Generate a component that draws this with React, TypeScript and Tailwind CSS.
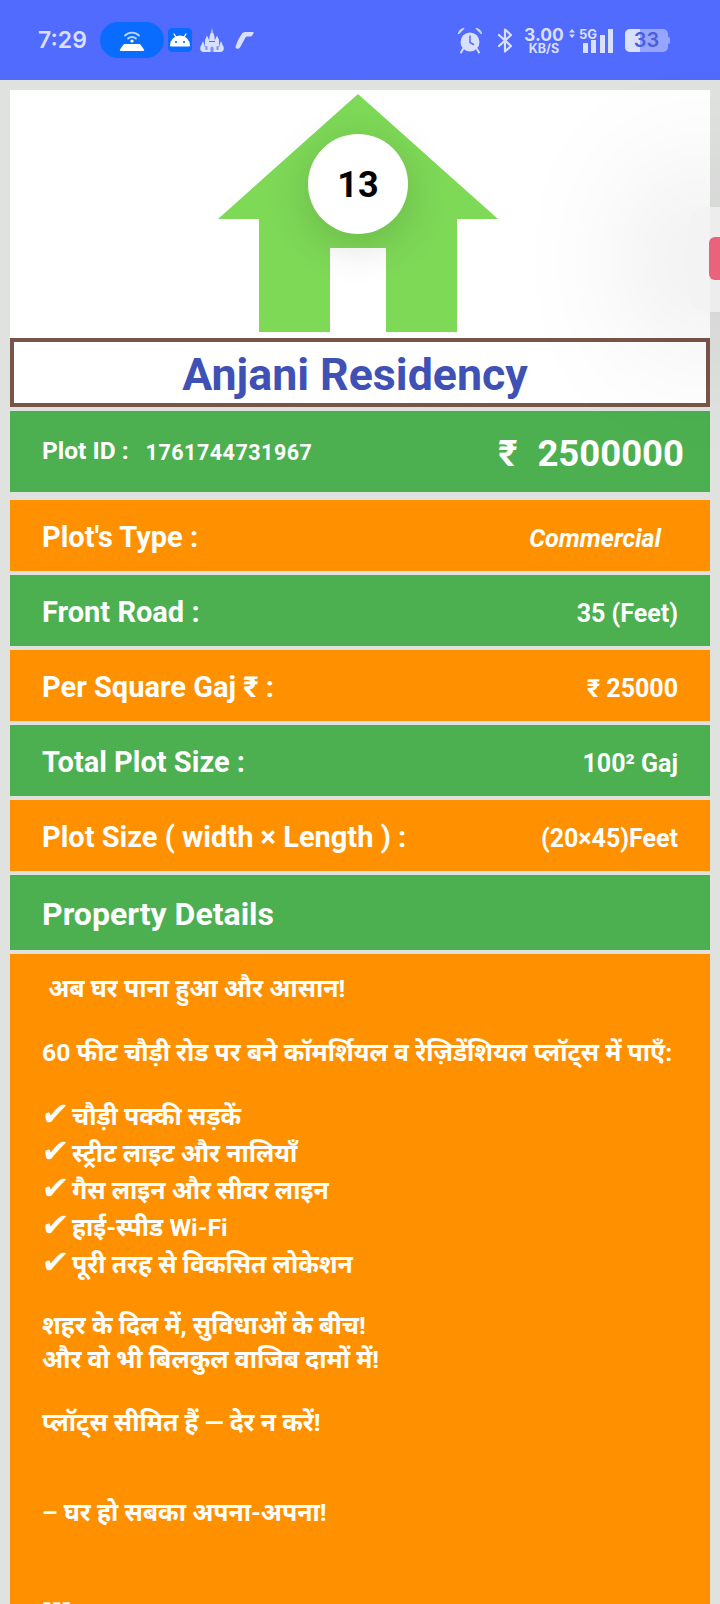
import React from "react";

const font = { fontFamily: "Roboto, 'Noto Sans', sans-serif" };

function StatusBar() {
  return (
    <div className="relative flex h-[80px] items-center bg-[#526bff] text-[#d9dfff]" style={{ fontFamily: "Inter, sans-serif" }}>
      <span className="ml-[38px] w-[62px] text-[23px] font-semibold leading-none">7:29</span>
      <div className="flex h-[36px] w-[64px] items-center justify-center rounded-full bg-[#0a6cff]">
        <svg width="28" height="24" viewBox="0 0 28 24">
          <path d="M7 7.5a10 10 0 0 1 14 0M10 10.5a6 6 0 0 1 8 0" fill="none" stroke="#bcd7ff" strokeWidth="1.8" strokeLinecap="round" />
          <circle cx="14" cy="13" r="1.6" fill="#fff" />
          <path d="M6 16h16l4 5.500q.4 1.500-1 1.500H3q-1.400 0-1-1.500z" fill="#fff" />
        </svg>
      </div>
      <div className="ml-[4px] flex h-[24px] w-[24px] items-center justify-center rounded-[4px] bg-[#0a6cff]">
        <svg width="22" height="14" viewBox="0 0 22 14">
          <path d="M1 12.500a10 10 0 0 1 20 0q0 1-1 1H2q-1 0-1-1z" fill="#fff" />
          <path d="M5 1l2.500 4M17 1l-2.500 4" stroke="#fff" strokeWidth="1.300" strokeLinecap="round" />
          <circle cx="7" cy="9" r="1.100" fill="#0a6cff" />
          <circle cx="15" cy="9" r="1.100" fill="#0a6cff" />
        </svg>
      </div>
      <svg className="ml-[8px]" width="24" height="24" viewBox="0 0 24 24" fill="#d9dfff">
        <path d="M12 0l.7 4h-1.400z" />
        <path d="M9.500 9Q9.800 5.500 12 3.500q2.200 2 2.500 5.500l.5 4H9z" />
        <path d="M5 12l2-4.500L9 12v6H5zM15 12l2-4.500 2 4.500v6h-4z" />
        <path d="M1.500 17l1.500-4 1.500 4v1.500h15V17l1.500-4 1.500 4q2 2 1 5-.5 2-3 2H3.500q-2.500 0-3-2-1-3 1-5z" />
        <path d="M7 14h10v6H7z" />
        <path d="M10.500 24v-4a1.500 1.500 0 0 1 3 0v4zM5.500 22v-3a1 1 0 0 1 2 0v3zM16.500 22v-3a1 1 0 0 1 2 0v3z" fill="#7d90ff" />
      </svg>
      <svg className="ml-[11px]" width="19" height="17" viewBox="0 0 19 17" fill="#d9dfff">
        <path d="M7 1.500Q8 0 10 0h8q1 0 .5 1.200l-1.500 2.600q-.5.700-1.500.7H12q-1 0-1.500 1L5 15.500Q4 17 2 16.800 0 16.500.5 14.500 3 7 7 1.500z" />
      </svg>

      <div className="ml-auto flex items-center">
        <svg width="26" height="27" viewBox="0 0 26 27" fill="none">
          <circle cx="13" cy="15" r="9.500" fill="#d9dfff" />
          <path d="M13 9v6.500l3.500 2" stroke="#526bff" strokeWidth="1.500" strokeLinecap="round" />
          <path d="M1.500 7Q2 2 7 1.500zM24.500 7Q24 2 19 1.500z" fill="#d9dfff" stroke="#d9dfff" strokeLinejoin="round" />
          <path d="M6 22l-2 3.500M20 22l2 3.500" stroke="#d9dfff" strokeWidth="2" strokeLinecap="round" />
        </svg>
        <svg className="ml-[14px]" width="16" height="25" viewBox="0 0 16 25" fill="none">
          <path d="M2 7l12 11-6 5.500V1.500L14 7 2 18" stroke="#d9dfff" strokeWidth="2.200" strokeLinejoin="round" strokeLinecap="round" />
        </svg>
        <div className="ml-[11px] flex w-[40px] flex-col items-center font-bold">
          <span className="h-[14px] text-[17.500px] leading-[14px]">3.00</span>
          <span className="h-[11px] text-[12.500px] leading-[13px]">KB/S</span>
        </div>
        <div className="relative ml-[5px] h-[26px] w-[45px]">
          <svg className="absolute left-0 top-0" width="45" height="26" viewBox="0 0 45 26" fill="#d9dfff">
            <path d="M3 2l3 3.500H0zM3 11L0 7.500h6z" />
            <rect x="14" y="16" width="5" height="10" />
            <rect x="22" y="13" width="5" height="13" />
            <rect x="31" y="8" width="5" height="18" />
            <rect x="39" y="2" width="5" height="24" />
          </svg>
          <span className="absolute left-[10px] top-[1px] text-[13px] font-bold leading-[13px]">5G</span>
        </div>
        <div className="relative ml-[11px] mr-[52px] flex h-[23px] w-[43px] items-center justify-center rounded-[5px] bg-[#d9dfff]/50">
          <div className="absolute bottom-0 left-0 top-0 w-[15px] rounded-l-[5px] bg-[#d9dfff]" />
          <span className="relative text-[20px] font-semibold leading-none text-[#4a5fdc]">33</span>
          <div className="absolute -right-[2px] top-[8px] h-[7px] w-[2px] rounded-r-sm bg-[#d9dfff]/50" />
        </div>
      </div>
    </div>
  );
}

function House() {
  return (
    <div className="flex h-[248px] justify-center bg-white pr-[4px] pt-[4px]">
      <div className="relative h-[238px] w-[280px]">
        <svg width="280" height="238" viewBox="0 0 280 238" className="absolute left-0 top-0">
          <path d="M140 0L280 125H239V238H168V154H112V238H41V125H0z" fill="#7ed957" />
        </svg>
        <div className="absolute left-[90px] top-[40px] flex h-[100px] w-[100px] items-center justify-center rounded-full bg-white shadow-[0_10px_45px_rgba(0,0,0,0.16)]">
          <span className="mt-[2px] text-[36px] font-bold leading-none text-black">13</span>
        </div>
      </div>
    </div>
  );
}

function Row({ label, value, color, valueClass = "" }: { label: string; value: string; color: string; valueClass?: string }) {
  return (
    <div className={`flex h-[71px] items-center justify-between pl-[32px] pr-[32px] text-white ${color}`}>
      <span className="mt-[4px] text-[29px] font-bold leading-none">{label}</span>
      <span className={`mt-[6px] text-[25px] font-bold leading-none ${valueClass}`}>{value}</span>
    </div>
  );
}

function Line({ children, h }: { children?: React.ReactNode; h: string }) {
  return <div className={`${h} whitespace-pre leading-[34px]`}>{children}</div>;
}

function Tick() {
  return <span className="inline-block w-[30px] -skew-x-6 text-[32px] font-bold" style={{ fontFamily: "'DejaVu Sans', sans-serif" }}>✔</span>;
}

export default function App() {
  return (
    <div className="relative h-[1604px] w-[720px] overflow-hidden bg-[#e0e2e0]" style={font}>
      <StatusBar />
      <div className="flex flex-col px-[10px] pt-[10px]">
        <House />
        <div className="flex h-[69px] items-center justify-center border-[4px] border-[#795548] bg-white pr-[10px] pt-[5px]">
          <span className="text-[44.700px] font-bold leading-none text-[#3f51b5]">Anjani Residency</span>
        </div>
        <div className="mt-[4px] flex h-[81px] items-center justify-between bg-[#4caf50] pl-[32px] pr-[26px] pt-[2px] text-white">
          <div className="flex items-center">
            <span className="mb-[3px] text-[24.500px] font-bold">Plot ID :</span>
            <span className="ml-[17px] mt-[2px] text-[21.500px] font-bold tracking-[0.500px]">1761744731967</span>
          </div>
          <div className="mt-[3px] flex items-center text-[36.500px] font-bold leading-none">
            <span>₹</span>
            <span className="ml-[20px]">2500000</span>
          </div>
        </div>
        <div className="mt-[8px] flex flex-col gap-[4px]">
          <Row label="Plot's Type :" value="Commercial" color="bg-[#ff9100]" valueClass="mr-[17px] italic" />
          <Row label="Front Road :" value="35 (Feet)" color="bg-[#4caf50]" />
          <Row label="Per Square Gaj ₹ :" value="₹ 25000" color="bg-[#ff9100]" />
          <Row label="Total Plot Size :" value="100² Gaj" color="bg-[#4caf50]" />
          <Row label="Plot Size ( width × Length ) :" value="(20×45)Feet" color="bg-[#ff9100]" />
          <div className="flex h-[75px] items-center bg-[#4caf50] pl-[32px] pt-[2px] text-white">
            <span className="text-[32px] font-bold leading-none">Property Details</span>
          </div>
          <div className="h-[700px] bg-[#ff9100] pl-[32px] pt-[18px] text-[24.800px] font-bold text-white">
            <Line h="h-[64px]"> अब घर पाना हुआ और आसान!</Line>
            <Line h="h-[61px]">60 फीट चौड़ी रोड पर बने कॉमर्शियल व रेज़िडेंशियल प्लॉट्स में पाएँ:</Line>
            <Line h="h-[37px]"><Tick />चौड़ी पक्की सड़कें</Line>
            <Line h="h-[37px]"><Tick />स्ट्रीट लाइट और नालियाँ</Line>
            <Line h="h-[37px]"><Tick />गैस लाइन और सीवर लाइन</Line>
            <Line h="h-[37px]"><Tick />हाई-स्पीड Wi-Fi</Line>
            <Line h="h-[64px]"><Tick />पूरी तरह से विकसित लोकेशन</Line>
            <Line h="h-[34px]">शहर के दिल में, सुविधाओं के बीच!</Line>
            <Line h="h-[63px]">और वो भी बिलकुल वाजिब दामों में!</Line>
            <Line h="h-[90px]">प्लॉट्स सीमित हैं — देर न करें!</Line>
            <Line h="h-[90px]">– घर हो सबका अपना-अपना!</Line>
            <Line h="h-[34px]">---</Line>
          </div>
        </div>
      </div>
      <div className="absolute right-0 top-[207px] h-[105px] w-[32px] rounded-l-[18px] bg-[#f0f0f0]/80 shadow-[0_0_150px_20px_rgba(0,0,0,0.2)]">
        <div className="absolute right-0 top-[30px] h-[43px] w-[11px] rounded-l-[6px] bg-[#e8637b]" />
      </div>
    </div>
  );
}
